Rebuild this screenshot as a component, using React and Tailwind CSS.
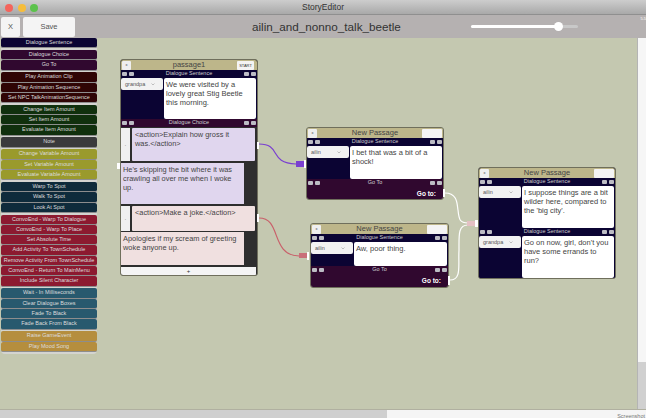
import React from 'react';

const font = { fontFamily: '"Liberation Sans", Arial, sans-serif' };

// sidebar buttons, grouped by color
const groups = [
  { color: 'bg-[#0b0433]', items: ['Dialogue Sentence'] },
  { color: 'bg-[#30082f]', items: ['Dialogue Choice', 'Go To'] },
  { color: 'bg-[#2f0505]', items: ['Play Animation Clip', 'Play Animation Sequence', 'Set NPC TalkAnimationSequence'] },
  { color: 'bg-[#10300d]', items: ['Change Item Amount', 'Set Item Amount', 'Evaluate Item Amount'] },
  { color: 'bg-[#3a3a3c]', items: ['Note'] },
  { color: 'bg-[#9a9a2c]', items: ['Change Variable Amount', 'Set Variable Amount', 'Evaluate Variable Amount'] },
  { color: 'bg-[#0f2b3b]', items: ['Warp To Spot', 'Walk To Spot', 'Look At Spot'] },
  { color: 'bg-[#8c1a30]', items: ['ConvoEnd - Warp To Dialogue', 'ConvoEnd - Warp To Place', 'Set Absolute Time', 'Add Activity To TownSchedule', 'Remove Activity From TownSchedule', 'ConvoEnd - Return To MainMenu', 'Include Silent Character'] },
  { color: 'bg-[#28596e]', items: ['Wait - In Milliseconds', 'Clear Dialogue Boxes', 'Fade To Black', 'Fade Back From Black'] },
  { color: 'bg-[#b58e3e]', items: ['Raise GameEvent', 'Play Mood Song'] },
];

const Sidebar = () => (
  <div className="w-[96px] h-[316px] ml-px bg-[#d4d4d0] rounded-b-sm flex flex-col gap-[1.7px]">
    {groups.map((g) => (
      <div key={g.items[0]} className="flex flex-col">
        {g.items.map((item) => (
          <div
            key={item}
            className={`${g.color} h-[10.3px] rounded-[2px] border-b border-[#8d8d8d] text-[#dcdcdc] text-[5.5px] leading-[9.5px] text-center whitespace-nowrap`}
          >
            {item}
          </div>
        ))}
      </div>
    ))}
  </div>
);

const Tiny = () => <div className="w-[5px] h-[4px] rounded-[1px] bg-[#bcbcc4]" />;

const Strip = ({ label, className = 'bg-[#0b0433]' }) => (
  <div className={`${className} h-2 flex items-center justify-between px-px`}>
    <div className="flex gap-[2px]"><Tiny /><Tiny /></div>
    <span className="text-[#cfcfcf] text-[5.5px] leading-none">{label}</span>
    <div className="flex gap-[2px]"><Tiny /><Tiny /></div>
  </div>
);

const Dropdown = ({ name }) => (
  <div className="w-[42px] h-[12px] bg-[#f2f2f2] rounded-[2px] flex items-center justify-between pl-1 pr-2 text-[#555] text-[5.5px]">
    <span>{name}</span>
    <svg width="4" height="3" viewBox="0 0 4 3"><path d="M0.5 0.5 L2 2 L3.5 0.5" fill="none" stroke="#888" strokeWidth="0.5" /></svg>
  </div>
);

const Sentence = ({ name, text, h }) => (
  <div>
    <Strip label="Dialogue Sentence" />
    <div className="bg-[#0b0433] flex pr-px gap-px">
      <Dropdown name={name} />
      <div className={`flex-1 bg-white rounded-[2px] px-[2px] pt-[2px] text-[#444] text-[7.5px] leading-[9px] ${h}`}>{text}</div>
    </div>
  </div>
);

const GoTo = ({ h }) => (
  <div className={`bg-[#30082f] flex flex-col ${h}`}>
    <Strip label="Go To" className="bg-[#30082f]" />
    <div className="text-white font-bold text-[6.5px] leading-[9px] text-right pr-[7px] pt-[2px]">Go to:</div>
  </div>
);

// passage header, side slots have the same width so the title stays centered
const Header = ({ title, start }) => (
  <div className="h-[10px] bg-[#bdb68a] rounded-t-[2px] flex items-center justify-between px-px text-[7.5px] text-[#444]">
    <div className="w-[22px]">
      <div className="w-[9px] h-[9px] bg-[#efefef] rounded-[1px] flex items-center justify-center text-[4px]">x</div>
    </div>
    <span>{title}</span>
    <div className="w-[22px] flex justify-end">
      <div className={`${start ? 'w-[17px] mr-[2px]' : 'w-[20px]'} h-[9px] bg-[#f4f4f4] rounded-[1px] text-[4px] leading-[9px] text-center text-[#333]`}>{start}</div>
    </div>
  </div>
);

const Choice = ({ text, reply, color, gap, h, rh }) => (
  <div className={`flex flex-col ${gap}`}>
    <div className={`flex gap-[2px] mr-[2px] ${h}`}>
      <div className="w-[9px] bg-[#f0f0f0] text-[5px] text-[#444] flex items-center justify-center">.</div>
      <div className={`flex-1 ${color} rounded-[1px] pl-[3px] pr-[18px] pt-[2px] text-[#444] text-[7.4px] leading-[9px]`}>{text}</div>
    </div>
    <div className={`mr-[13px] ${rh} ${color} px-[2px] pt-[2px] text-[#444] text-[7.4px] leading-[9px]`}>{reply}</div>
  </div>
);

const Node = ({ className, children }) => (
  <div className={`absolute rounded-[3px] border border-[#6f6f5c] overflow-hidden ${className}`}>{children}</div>
);

const Port = ({ className }) => <div className={`absolute bg-white ${className}`} />;

export default function App() {
  return (
    <div className="w-[646px] h-[418px] flex flex-col overflow-hidden bg-[#c4c8b0]" style={font}>
      {/* title bar */}
      <div className="h-[15px] shrink-0 bg-gradient-to-b from-[#cdcdcd] to-[#a9a9a9] border-b border-[#8f8f8f] flex items-center relative">
        <div className="absolute left-[5px] top-1 flex gap-[4.5px]">
          <div className="w-[8px] h-[8px] rounded-full bg-[#f4645c]" />
          <div className="w-[8px] h-[8px] rounded-full bg-[#f6bd3b]" />
          <div className="w-[8px] h-[8px] rounded-full bg-[#5cc24c]" />
        </div>
        <div className="flex-1 text-center text-[8.5px] text-[#333]">StoryEditor</div>
      </div>

      {/* toolbar */}
      <div className="h-[23px] shrink-0 bg-[#b5b1b1] flex items-center relative">
        <button className="ml-px w-[19px] h-[20px] bg-[#f4f4f4] rounded-[2px] text-[#555] text-[7.5px]">X</button>
        <button className="ml-[3px] w-[52px] h-[20px] bg-[#f4f4f4] rounded-[2px] text-[#555] text-[7.5px]">Save</button>
        <div className="ml-[177px] w-[148px] text-center text-[11.7px] text-[#333] whitespace-nowrap">ailin_and_nonno_talk_beetle</div>
        <div className="ml-[71px] w-[107px] h-[3px] rounded-full bg-[#c8c8c8] relative">
          <div className="w-[87px] h-[3px] rounded-full bg-white" />
          <div className="absolute left-[83px] top-[-3px] w-[9px] h-[9px] rounded-full bg-white" />
        </div>
        <span className="absolute right-0 top-[1px] text-[4px] text-white">5.5</span>
      </div>

      {/* canvas */}
      <div className="flex-1 flex min-h-0">
        <div className="flex-1 relative">
          <Sidebar />

          <svg className="absolute left-0 top-0" width="637" height="371" viewBox="0 38 637 371" fill="none">
            <path d="M259 144 C282 144 268 163 296 164" stroke="#7a3fd0" strokeWidth="1.2" />
            <path d="M259 218 C282 218 270 255 299 256" stroke="#c9606a" strokeWidth="1.2" />
            <path d="M445 193 C458 193 457 205 458 210 C459 220 460 223 468 223" stroke="#fff" strokeWidth="1.2" />
            <path d="M450 280 C462 280 458 265 459 250 C459 235 458 225 468 225" stroke="#fff" strokeWidth="1.2" />
          </svg>

          {/* passage1 */}
          <Node className="left-[120px] top-[21px] w-[138px] h-[217px] bg-[#2e2e2e]">
            <Header title="passage1" start="START" />
            <Sentence name="grandpa" h="h-[41px]" text="We were visited by a lovely great Stig Beetle this morning." />
            <Strip label="Dialogue Choice" className="bg-[#30082f]" />
            <div className="flex flex-col pt-px">
              <Choice text="<action>Explain how gross it was.</action>" color="bg-[#e0d6ee]" gap="gap-[2px]" h="h-[33px]" rh="h-[41px]"
                reply="He's skipping the bit where it was crawling all over me when I woke up." />
              <div className="h-[2px]" />
              <Choice text="<action>Make a joke.</action>" color="bg-[#f0e0e0]" gap="gap-px" h="h-[25px]" rh="h-[33px]"
                reply="Apologies if my scream of greeting woke anyone up." />
            </div>
            <div className="mr-px mt-[2px] h-2 bg-[#f4f4f4] text-[6px] leading-[8px] text-center text-[#333]">+</div>
          </Node>
          <Port className="left-[257px] top-[104px] w-[2px] h-[7px]" />
          <Port className="left-[257px] top-[176px] w-[2px] h-[8px]" />
          <Port className="left-[117px] top-[125px] w-[3px] h-[6px]" />

          {/* passage top middle */}
          <Node className="left-[306px] top-[89px] w-[138px] h-[73px]">
            <Header title="New Passage" start="" />
            <Sentence name="ailin" h="h-[33px]" text="I bet that was a bit of a shock!" />
            <GoTo h="h-[21px]" />
          </Node>
          <div className="absolute left-[296px] top-[123px] w-[8px] h-[6px] bg-[#7a3fd0]" />
          <Port className="left-[304px] top-[122px] w-[2px] h-[8px]" />
          <Port className="left-[443px] top-[151px] w-[2px] h-[8px]" />

          {/* passage bottom middle */}
          <Node className="left-[310px] top-[185px] w-[139px] h-[65px]">
            <Header title="New Passage" start="" />
            <Sentence name="ailin" h="h-[24px]" text="Aw, poor thing." />
            <GoTo h="h-[21px]" />
          </Node>
          <div className="absolute left-[299px] top-[215px] w-[8px] h-[5px] bg-[#c9707a]" />
          <Port className="left-[307px] top-[214px] w-[2px] h-[8px]" />
          <Port className="left-[448px] top-[238px] w-[2px] h-[9px]" />

          {/* passage right */}
          <Node className="left-[478px] top-[129px] w-[138px] h-[112px] bg-[#0b0433]">
            <Header title="New Passage" start="" />
            <Sentence name="ailin" h="h-[42px]" text="I suppose things are a bit wilder here, compared to the 'big city'." />
            <Sentence name="grandpa" h="h-[42px]" text="Go on now, girl, don't you have some errands to run?" />
          </Node>
          <div className="absolute left-[467px] top-[183px] w-[9px] h-[5px] bg-[#e4c0c4]" />
          <Port className="left-[475px] top-[182px] w-[3px] h-[7px]" />
        </div>

        {/* vertical scrollbar */}
        <div className="w-[9px] bg-[#d0d0d0] border-l border-[#b4b4b4]">
          <div className="h-[324px] bg-[#f6f6f6]" />
        </div>
      </div>

      {/* horizontal scrollbar */}
      <div className="h-[9px] shrink-0 flex border-t border-[#b0b0a0]">
        <div className="w-[387px] bg-[#cfcfcf]" />
        <div className="flex-1 bg-[#f5f5f5] relative">
          <span className="absolute right-px bottom-[-1px] text-[5.5px] leading-none text-[#777]">Screenshot</span>
        </div>
      </div>
    </div>
  );
}
